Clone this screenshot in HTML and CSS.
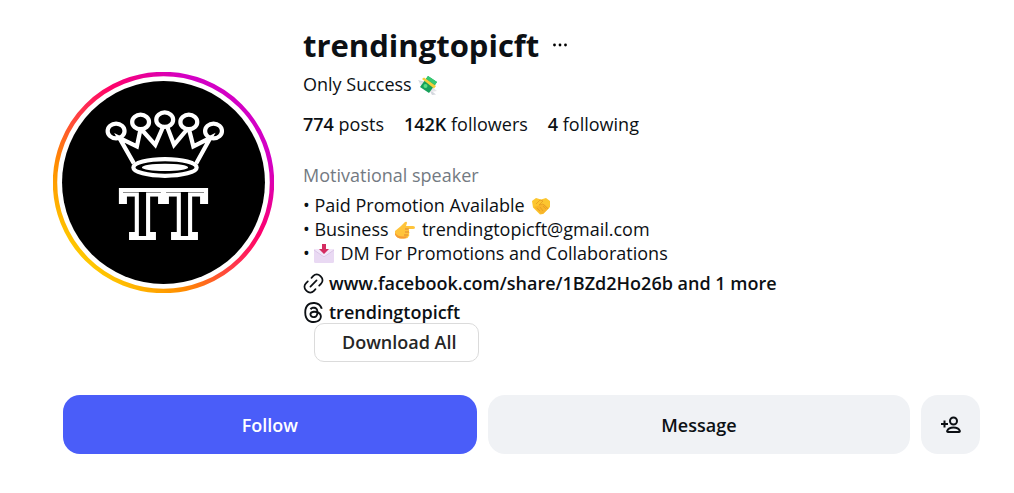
FILE: index.html
```html
<!DOCTYPE html>
<html lang="en">
<head>
  <meta charset="UTF-8">
  <title>trendingtopicft</title>
  <meta name="viewport" content="width=device-width, initial-scale=1">
  <link rel="stylesheet" href="styles.css">
</head>
<body>

<main class="profile">
  <header class="profile-head">
    <svg class="avatar" viewBox="0 0 220 220" role="img" aria-label="trendingtopicft profile picture">
      <defs>
        <linearGradient id="ring" x1="0" y1="1" x2="1" y2="0">
          <stop offset=".14" stop-color="#ffc800"/>
          <stop offset=".3" stop-color="#ff8a00"/>
          <stop offset=".5" stop-color="#ff2a55"/>
          <stop offset=".6" stop-color="#ff0169"/>
          <stop offset=".8" stop-color="#d300c5"/>
        </linearGradient>
      </defs>
      <circle cx="110" cy="110" r="108" fill="none" stroke="url(#ring)" stroke-width="4.4"/>
      <circle cx="110" cy="110" r="101"/>
      <!-- crown -->
      <g fill="none" stroke="#fff" stroke-width="4.2">
        <ellipse cx="62.8" cy="58.7" rx="8.4" ry="7.4"/>
        <ellipse cx="87.2" cy="49.7" rx="8.4" ry="7.2"/>
        <ellipse cx="111.2" cy="47.5" rx="8.4" ry="7.2"/>
        <ellipse cx="135.2" cy="49.7" rx="8.4" ry="7.2"/>
        <ellipse cx="159.8" cy="58.7" rx="8.4" ry="7.4"/>
        <path d="M80.500 91 66 65.500l17.500 8.500 3.500-16.500M87.500 56.500l14.300 16 7.400-17M114 55.500l6.500 17 13.500-16M135.500 57.500l4.200 16.500 17-8.500L142.500 91"/>
        <ellipse cx="111.500" cy="95" rx="31.500" ry="8.300"/>
      </g>
      <ellipse cx="111.500" cy="95" rx="23" ry="3.600" fill="#fff"/>
      <text class="monogram" x="110" y="165" text-anchor="middle">TT</text>
    </svg>

    <div class="info">
      <div class="name-row">
        <h1>trendingtopicft</h1>
        <button class="more" aria-label="Options">
          <svg viewBox="0 0 16 4"><circle cx="2.500" cy="2" r="1.400"/><circle cx="8" cy="2" r="1.400"/><circle cx="13.500" cy="2" r="1.400"/></svg>
        </button>
      </div>

      <p class="full-name">Only Success
        <svg class="emoji" viewBox="0 0 20 20" role="img" aria-label="money with wings">
          <path d="M0 5l8 2-4 4zM11 14l7 5.500-4 .5z" fill="#d5d8df"/>
          <path d="M1 7l5 1-3 3zM13 11l6 5-6 1z" fill="#e6e5ea"/>
          <path d="M10 1l9 6-8 11-9-6z" fill="#16a05a"/>
          <path d="M10 1l9 6-2 3L8 4z" fill="#35ca71"/>
          <circle cx="7.500" cy="11" r="2" fill="#58dc83"/>
          <path d="M4 4l2-1.500 12 8.500-2 2.500z" fill="#f4cf3b"/>
        </svg>
      </p>

      <ul class="stats">
        <li><b>774</b> posts</li>
        <li><b>142K</b> followers</li>
        <li><b>4</b> following</li>
      </ul>

      <p class="category">Motivational speaker</p>
      <ul class="bio">
        <li>• Paid Promotion Available
          <svg class="emoji" viewBox="0 0 20 20" role="img" aria-label="handshake">
            <path d="M1 5l4-3 5 1.500L15 2l4 3v6l-7 7-3 .5-7-7z" fill="#fcc62f"/>
            <path d="M3 11l7 7 2.500-.5L18 12l-5-4z" fill="#f8b52a"/>
            <path d="M5 8l4-4 3 1-4 4 4-1 5 5M6 12l3 3M9 11l3 4M12 10l3 3" fill="none" stroke="#e59a22" stroke-width=".8"/>
          </svg>
        </li>
        <li>• Business
          <svg class="emoji" viewBox="0 0 20 20" role="img" aria-label="pointing right">
            <path d="M0 11l6-5 4-4q2-1 2 1l-1 3h7q2 0 2 1.500T18 9h-5q2 1 1 2.500 1 1 0 2.500 1 1-.5 2.500-.5 2-3 2H6q-4 0-6-4z" fill="#ffc43b"/>
            <path d="M0 13q4 5 12 3-1 2.500-3 2.500H6q-4 0-6-4z" fill="#f69b35"/>
            <path d="M10 9h4M10 12h4M9 15h4" stroke="#df8730" fill="none"/>
          </svg>
          trendingtopicft@gmail.com</li>
        <li>•<svg class="emoji emoji-mail" viewBox="0 0 20 20" role="img" aria-label="envelope with arrow">
            <rect y="5" width="20" height="14" rx="1.500" fill="#e9d9f3"/>
            <path d="M0 6l10 8L20 6v-1H0z" fill="#f2e6f9"/>
            <path d="M0 6l10 7L20 6" stroke="#d9c4e5" fill="none"/>
            <path d="M8 0h4v5h3l-5 5L5 5h3z" fill="#d42c61"/>
          </svg>
          DM For Promotions and Collaborations</li>
      </ul>

      <a class="link" href="#">
        <svg viewBox="0 0 24 24" fill="none" stroke="currentColor" stroke-width="2" stroke-linecap="round">
          <path d="M9.700 5.500l2.100-2.200a5.500 5.500 0 0 1 7.800 0l1.100 1.100a5.500 5.500 0 0 1 0 7.800l-2.200 2.200M14.300 18.500l-2.100 2.200a5.500 5.500 0 0 1-7.800 0l-1.100-1.100a5.500 5.500 0 0 1 0-7.800l2.200-2.200M8.500 15.500l7-7"/>
        </svg>
        www.facebook.com/share/1BZd2Ho26b and 1 more
      </a>
      <a class="link" href="#">
        <svg viewBox="0 0 16 16" fill="currentColor">
          <path d="M6.321 6.016c-.27-.18-1.166-.802-1.166-.802.756-1.081 1.753-1.502 3.132-1.502.975 0 1.803.327 2.394.948s.928 1.509 1.005 2.644q.492.207.905.484c1.109.745 1.719 1.860 1.719 3.137 0 2.716-2.226 5.075-6.256 5.075C4.594 16 1 13.987 1 7.994 1 2.034 4.482 0 8.044 0 9.690 0 13.550.243 15 5.036l-1.360.353C12.516 1.974 10.163 1.430 8.006 1.430c-3.565 0-5.582 2.171-5.582 6.790 0 4.143 2.254 6.343 5.630 6.343 2.777 0 4.847-1.443 4.847-3.556 0-1.438-1.208-2.127-1.270-2.127-.236 1.234-.868 3.310-3.644 3.310-1.618 0-3.013-1.118-3.013-2.582 0-2.090 1.984-2.847 3.550-2.847.586 0 1.294.040 1.663.114 0-.637-.540-1.728-1.900-1.728-1.250 0-1.566.405-1.967.868ZM8.716 8.190c-2.040 0-2.304.870-2.304 1.416 0 .878 1.043 1.168 1.600 1.168 1.020 0 2.067-.282 2.232-2.423a6.200 6.200 0 0 0-1.528-.161"/>
        </svg>
        trendingtopicft
      </a>
      <button class="download">Download All</button>
    </div>
  </header>

  <div class="actions">
    <button class="follow">Follow</button>
    <button>Message</button>
    <button aria-label="Similar accounts">
      <svg viewBox="0 0 20 18" fill="none" stroke="currentColor" stroke-width="2">
        <circle cx="12.500" cy="5" r="3.500"/>
        <path d="M7 16q-1 0-.8-1.200 1.300-3.300 6.300-3.300t6.300 3.300Q19 16 18 16zM0 8h7M3.500 4.500v7"/>
      </svg>
    </button>
  </div>
</main>

</body>
</html>
```
FILE: styles.css
```css
* {
  box-sizing: border-box;
}

body {
  margin: 0;
  background: #fff;
  color: #0c1014;
  font-family: "Open Sans", "Noto Sans", sans-serif;
  font-size: 18px;
  line-height: 24px;
}

h1, p, ul {
  margin: 0;
  padding: 0;
}

ul {
  list-style: none;
}

button {
  border: none;
  color: inherit;
  font: inherit;
  font-weight: 600;
  cursor: pointer;
}

.profile {
  padding: 23px 34px 40px 53px;
}

.profile-head {
  display: flex;
  gap: 29px;
}

.avatar {
  flex: none;
  width: 221px;
  height: 221px;
  margin-top: 49px;
}

.monogram {
  font-family: "DejaVu Serif Condensed", "DejaVu Serif", serif;
  font-size: 66px;
  font-weight: bold;
  fill: #000;
  stroke: #fff;
  stroke-width: 4px;
}

.info {
  display: flex;
  flex-direction: column;
  align-items: flex-start;
}

.name-row {
  display: flex;
  align-items: center;
  gap: 13px;
}

h1 {
  font-size: 31px;
  line-height: 44px;
}

.more {
  display: flex;
  padding: 0;
  background: none;
}
.more svg {
  width: 16px;
  height: 4px;
}

.full-name {
  margin-top: 5px;
}

.emoji {
  width: 20px;
  height: 20px;
  margin: 0 2px;
  vertical-align: -4px;
}
.emoji-mail {
  margin-left: 4px;
}

.stats {
  display: flex;
  gap: 20px;
  margin-top: 16px;
}
.stats b {
  font-weight: 600;
}

.category {
  margin-top: 27px;
  color: #737a82;
}

.bio {
  margin-top: 6px;
}

.link {
  display: flex;
  align-items: center;
  gap: 5px;
  margin-top: 5px;
  color: inherit;
  font-weight: 600;
  text-decoration: none;
}
.bio + .link {
  margin-top: 6px;
}
.link svg {
  width: 21px;
  height: 21px;
}

.download {
  height: 39px;
  margin: -1px 0 0 11px;
  padding: 0 21px 2px 27px;
  border: 1px solid #dbdbdb;
  border-radius: 10px;
  background: #fff;
  color: #262626;
}

.actions {
  display: grid;
  grid-template-columns: 49fr 50fr 59px;
  gap: 11px;
  margin: 33px 0 0 10px;
}
.actions button {
  display: flex;
  align-items: center;
  justify-content: center;
  height: 59px;
  padding: 0;
  border-radius: 17px;
  background: #f0f2f5;
}
.actions .follow {
  background: #4a5df9;
  color: #fff;
}
.actions svg {
  width: 20px;
  height: 18px;
}
```
